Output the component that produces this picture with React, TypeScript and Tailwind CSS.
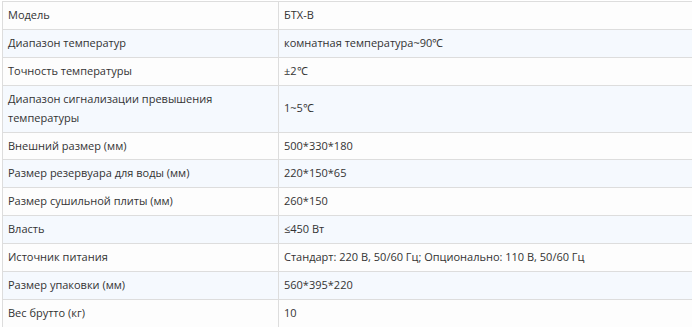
import React from 'react';

const rows: [string, string][] = [
  ['Модель', 'БТХ-В'],
  ['Диапазон температур', 'комнатная температура~90℃'],
  ['Точность температуры', '±2℃'],
  ['Диапазон сигнализации превышения температуры', '1~5℃'],
  ['Внешний размер (мм)', '500*330*180'],
  ['Размер резервуара для воды (мм)', '220*150*65'],
  ['Размер сушильной плиты (мм)', '260*150'],
  ['Власть', '≤450 Вт'],
  ['Источник питания', 'Стандарт: 220 В, 50/60 Гц; Опционально: 110 В, 50/60 Гц'],
  ['Размер упаковки (мм)', '560*395*220'],
  ['Вес брутто (кг)', '10'],
];

export default function App() {
  return (
    <div className="w-[692px] h-[327px] overflow-hidden bg-white pl-[2px] pt-[1px]">
      <table className="w-[720px] border-collapse text-[11px] leading-[18.9px] text-[#333] font-['Open_Sans',sans-serif]">
        <tbody>
          {rows.map(([name, value], i) => (
            <tr key={name} className={i % 2 === 0 ? 'bg-[#fdfdfd]' : 'bg-[#f5f9fe]'}>
              <td className="w-[276px] border border-[#dddddd] px-[5px] py-1 align-middle">{name}</td>
              <td className="border border-[#dddddd] px-[5px] py-1 align-middle">{value}</td>
            </tr>
          ))}
        </tbody>
      </table>
    </div>
  );
}
